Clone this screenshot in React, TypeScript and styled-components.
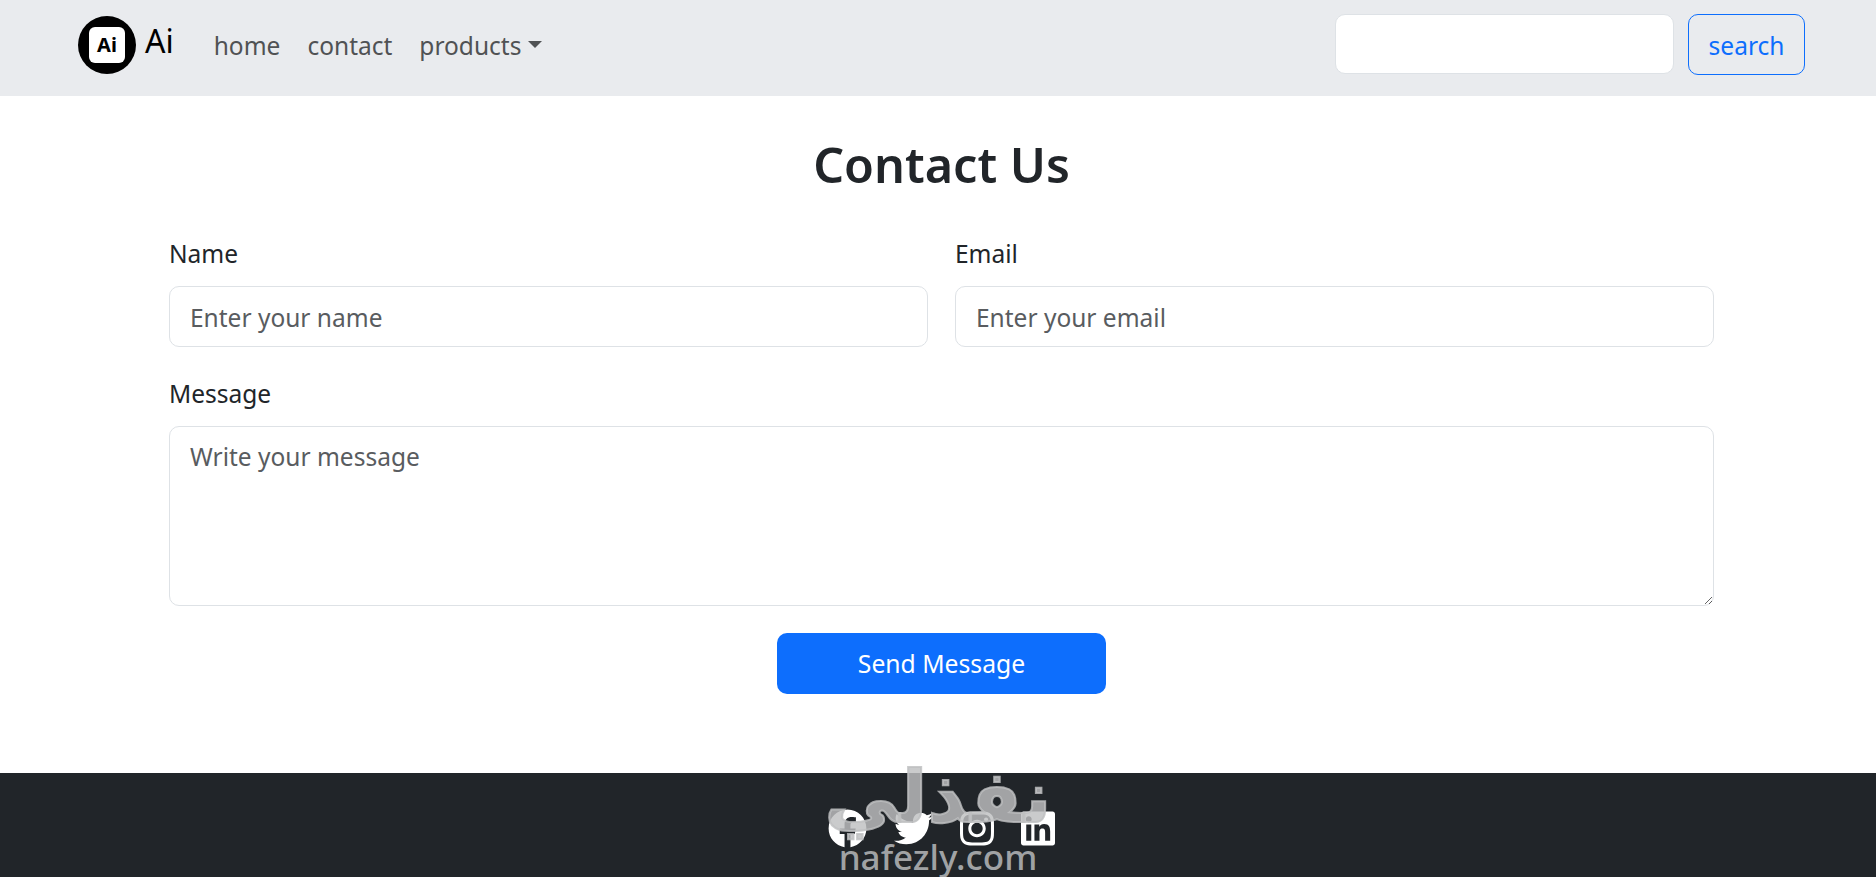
import React from 'react';
import styled, { createGlobalStyle } from 'styled-components';
import { FaFacebook, FaTwitter, FaInstagram, FaLinkedin } from 'react-icons/fa';

const GlobalStyle = createGlobalStyle`
  html, body {
    margin: 0;
    padding: 0;
    background: #fff;
  }
  * {
    box-sizing: border-box;
  }
`;

const FONT = `"Noto Sans", "Open Sans", Arial, sans-serif`;

const Page = styled.div`
  display: flex;
  flex-direction: column;
  height: 877px;
  overflow: hidden;
  font-family: ${FONT};
  color: #212529;
`;

const Navbar = styled.nav`
  display: flex;
  align-items: center;
  height: 96px;
  flex-shrink: 0;
  padding: 0 71px 7px 78px;
  background: #e9ebee;
`;

const Brand = styled.a`
  display: flex;
  align-items: center;
  gap: 9px;
  margin-right: 40px;
  color: #000;
  font-size: 32px;
`;

const BrandText = styled.span`
  margin-top: -9px;
`;

const LogoCircle = styled.div`
  display: flex;
  align-items: center;
  justify-content: center;
  width: 58px;
  height: 58px;
  border-radius: 50%;
  background: #000;
`;

const LogoTile = styled.div`
  display: flex;
  align-items: center;
  justify-content: center;
  width: 36px;
  height: 36px;
  border-radius: 6px;
  background: #fff;
  color: #000;
  font-size: 20px;
  font-weight: 700;
`;

const NavLinks = styled.div`
  display: flex;
  align-items: center;
  gap: 27px;
  flex: 1;
  padding-top: 2px;
`;

const NavLink = styled.a`
  display: flex;
  align-items: center;
  color: #505254;
  font-size: 24.5px;
`;

const Caret = styled.span`
  width: 0;
  height: 0;
  margin-left: 7px;
  margin-bottom: 2px;
  border-top: 7px solid #505254;
  border-left: 7px solid transparent;
  border-right: 7px solid transparent;
`;

const SearchForm = styled.form`
  display: flex;
  gap: 14px;
`;

const SearchInput = styled.input`
  width: 339px;
  height: 60px;
  border: 1px solid #dee2e6;
  border-radius: 10px;
  background: #fff;
`;

const SearchButton = styled.button`
  width: 117px;
  height: 61px;
  padding: 2px 0 0;
  border: 1px solid #0d6efd;
  border-radius: 10px;
  background: transparent;
  color: #0d6efd;
  font-family: ${FONT};
  font-size: 24.5px;
`;

const Main = styled.main`
  flex: 1;
  padding: 0 162px 0 169px;
`;

const Title = styled.h1`
  margin: 29px 0 33px;
  text-align: center;
  font-size: 48.5px;
  line-height: 78px;
  font-weight: 600;
  color: #212529;
`;

const Row = styled.div`
  display: grid;
  grid-template-columns: 1fr 1fr;
  gap: 27px;
  margin-bottom: 29px;
`;

const Field = styled.div`
  display: flex;
  flex-direction: column;
`;

const MessageField = styled(Field)`
  margin-bottom: 27px;
`;

const Label = styled.label`
  margin-bottom: 14px;
  font-size: 24.5px;
  line-height: 36px;
  color: #212529;
`;

const TextInput = styled.input`
  height: 61px;
  padding: 2px 20px 0;
  border: 1px solid #dee2e6;
  border-radius: 10px;
  font-family: ${FONT};
  font-size: 24.5px;
  color: #212529;

  &::placeholder {
    color: #595c5f;
    opacity: 1;
  }
`;

const MessageInput = styled.textarea`
  display: block;
  height: 180px;
  padding: 12px 20px;
  border: 1px solid #dee2e6;
  border-radius: 10px;
  font-family: ${FONT};
  font-size: 24.5px;
  line-height: 36px;
  color: #212529;

  &::placeholder {
    color: #595c5f;
    opacity: 1;
  }
`;

const SubmitRow = styled.div`
  display: flex;
  justify-content: center;
`;

const SendButton = styled.button`
  width: 329px;
  height: 61px;
  border: none;
  border-radius: 10px;
  background: #0d6efd;
  color: #fff;
  font-family: ${FONT};
  font-size: 24.7px;
`;

const Footer = styled.footer`
  position: relative;
  display: flex;
  justify-content: center;
  align-items: center;
  gap: 27px;
  height: 104px;
  flex-shrink: 0;
  padding: 7px 0 0 7px;
  background: #212529;
  color: #fff;
`;

const SocialIcon = styled.a<{ $narrow?: boolean }>`
  display: flex;
  color: #fff;

  svg {
    width: ${props => (props.$narrow ? '34px' : '39px')};
    height: 39px;
  }
`;

// the site's watermark sits over the footer and pokes out above it
const Watermark = styled.div`
  position: absolute;
  left: 50%;
  top: -12px;
  transform: translateX(-50%);
  display: flex;
  flex-direction: column;
  align-items: center;
  color: rgba(190, 192, 193, 0.82);
  pointer-events: none;
`;

const WatermarkArabic = styled.span`
  font-family: "DejaVu Sans", sans-serif;
  font-size: 72px;
  font-weight: 700;
  line-height: 72px;
  transform: scaleX(1.03);
  -webkit-text-stroke: 2px rgba(190, 192, 193, 0.82);
`;

const WatermarkLatin = styled.span`
  margin-top: 5px;
  font-family: ${FONT};
  font-size: 35px;
  font-weight: 500;
  line-height: 38px;
`;

export default function App() {
  return (
    <Page>
      <GlobalStyle />
      <Navbar>
        <Brand>
          <LogoCircle>
            <LogoTile>Ai</LogoTile>
          </LogoCircle>
          <BrandText>Ai</BrandText>
        </Brand>
        <NavLinks>
          <NavLink>home</NavLink>
          <NavLink>contact</NavLink>
          <NavLink>
            products
            <Caret />
          </NavLink>
        </NavLinks>
        <SearchForm>
          <SearchInput />
          <SearchButton type="button">search</SearchButton>
        </SearchForm>
      </Navbar>
      <Main>
        <Title>Contact Us</Title>
        <Row>
          <Field>
            <Label>Name</Label>
            <TextInput placeholder="Enter your name" />
          </Field>
          <Field>
            <Label>Email</Label>
            <TextInput placeholder="Enter your email" />
          </Field>
        </Row>
        <MessageField>
          <Label>Message</Label>
          <MessageInput placeholder="Write your message" />
        </MessageField>
        <SubmitRow>
          <SendButton type="button">Send Message</SendButton>
        </SubmitRow>
      </Main>
      <Footer>
        <SocialIcon><FaFacebook /></SocialIcon>
        <SocialIcon><FaTwitter /></SocialIcon>
        <SocialIcon $narrow><FaInstagram /></SocialIcon>
        <SocialIcon $narrow><FaLinkedin /></SocialIcon>
        <Watermark>
          <WatermarkArabic>نفذلي</WatermarkArabic>
          <WatermarkLatin>nafezly.com</WatermarkLatin>
        </Watermark>
      </Footer>
    </Page>
  );
}
